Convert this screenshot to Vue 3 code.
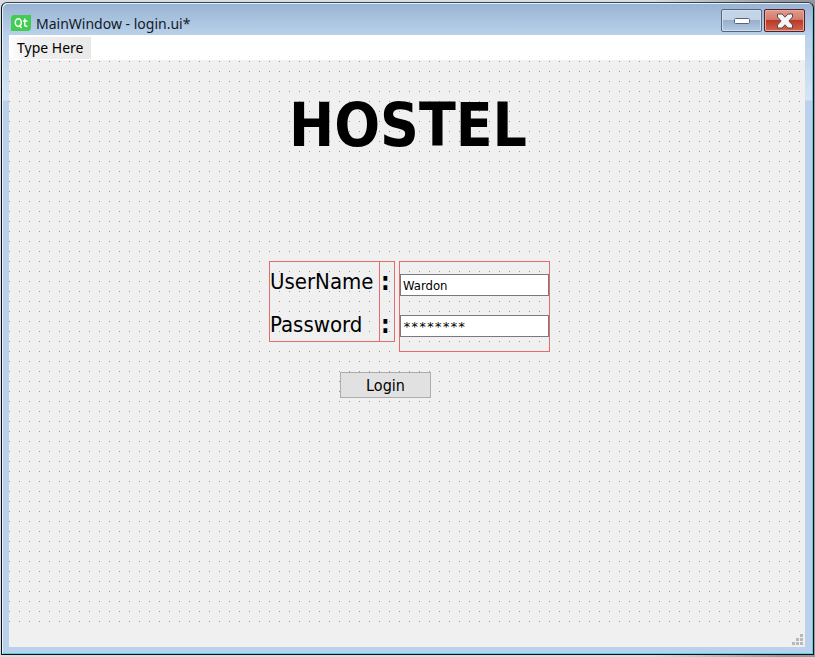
<script setup>
import { ref } from 'vue'

const username = ref('Wardon')
const password = ref('********')
</script>

<template>
  <div class="desktop">
    <main class="window">
      <header class="titlebar">
        <svg class="logo" viewBox="0 0 20 16" aria-hidden="true">
          <path d="M2 0H20V14L18 16H0V2Z" fill="#41cd52" />
          <ellipse cx="7.3" cy="7.6" rx="3" ry="3.9" fill="none" stroke="#fff" stroke-width="1.5" />
          <path d="M8 10L10.6 13M13.8 3.5V10.2Q13.8 11.6 16.4 11.2M12 6H16.4" fill="none" stroke="#fff" stroke-width="1.4" />
        </svg>
        <span class="title">MainWindow - login.ui*</span>
        <div class="controls">
          <button class="control" type="button" aria-label="Minimize">
            <svg width="18" height="8" viewBox="0 0 18 8"><rect x="1.5" y="1.5" width="15" height="5" rx="1" fill="#fff" stroke="#56647a" /></svg>
          </button>
          <button class="control close" type="button" aria-label="Close">
            <svg width="18" height="16" viewBox="0 0 18 16">
              <path d="M1.5 1H6L9 4.2L12 1H16.5V4L12.9 8L16.5 12V15H12L9 11.8L6 15H1.5V12L5.1 8L1.5 4Z" fill="#f6f4f4" stroke="#5c4650" stroke-linejoin="round" />
            </svg>
          </button>
        </div>
      </header>

      <div class="client">
        <nav class="menubar"><button class="menu" type="button">Type Here</button></nav>
        <section class="canvas">
          <h1>HOSTEL</h1>
          <form class="form" @submit.prevent>
            <div class="fields">
              <div class="box labels">
                <label for="username">UserName</label>
                <label for="password">Password</label>
              </div>
              <div class="box colons"><span>:</span><span>:</span></div>
              <div class="box inputs">
                <input id="username" v-model="username" type="text" />
                <input id="password" v-model="password" class="secret" type="text" autocomplete="off" />
              </div>
            </div>
            <button class="login" type="submit">Login</button>
          </form>
        </section>
        <footer class="statusbar">
          <svg width="12" height="12" viewBox="0 0 12 12" fill="#b9b9b9" aria-hidden="true">
            <path d="M8 0h3v3H8zM4 4h3v3H4zM8 4h3v3H8zM0 8h3v3H0zM4 8h3v3H4zM8 8h3v3H8z" />
          </svg>
        </footer>
      </div>
    </main>
  </div>
</template>

<style>
body {
  margin: 0;
}
</style>

<style scoped>
.desktop {
  box-sizing: border-box;
  display: flex;
  min-height: 100vh;
  padding: 2px 1px;
  background: linear-gradient(90deg, #d9dde2 0 80%, #94979b 96%);
  font-family: "DejaVu Sans Condensed", "DejaVu Sans", sans-serif;
  color: #000;
}
.window {
  box-sizing: border-box;
  flex: 1;
  display: flex;
  flex-direction: column;
  padding: 0 8px 7px 7px;
  border: 1px solid #111;
  border-top-color: #36414d;
  border-radius: 6px 6px 0 0;
  background: linear-gradient(180deg, #98b3d2 0, #b9d1ea 32px, #d5e5f5 97px, #b9d1ea 98px);
  box-shadow: inset 1px 1px 0 #e5f1fb, inset -1px -1px 0 #5ccbe9;
}
.titlebar {
  display: flex;
  align-items: center;
  height: 32px;
  padding-left: 2px;
}
.logo {
  width: 20px;
  height: 16px;
  margin-top: 8px;
}
.title {
  margin: 10px 0 0 5px;
  font: 14px/20px "Noto Sans", "Open Sans", sans-serif;
  color: #111b28;
}
.controls {
  display: flex;
  gap: 2px;
  margin-left: auto;
  padding-top: 3px;
}
.control {
  box-sizing: border-box;
  display: flex;
  align-items: center;
  justify-content: center;
  width: 41px;
  height: 23px;
  padding: 0;
  border: 1px solid #55677f;
  border-radius: 2px;
  background: linear-gradient(#c4d4e7 0 45%, #96afcd 50%, #b5cae2);
  box-shadow: inset 0 0 0 1px #cfdfef;
}
.close {
  border-color: #561f26;
  background: linear-gradient(#e29a8c 0, #d27c6d 45%, #b93a26 50%, #cf6650);
  box-shadow: inset 0 0 0 1px #e7aaa0;
}
.client {
  flex: 1;
  display: flex;
  flex-direction: column;
  background: #f0f0f0;
}
.menubar {
  display: flex;
  height: 25px;
  background: #fff;
}
.menu {
  height: 22px;
  margin-top: 2px;
  padding: 0 8px;
  border: 0;
  background: linear-gradient(90deg, #fff 0, #f0f0f0 20%, #e9e9e9);
  font: 14px/22px "Noto Sans", "Open Sans", sans-serif;
  color: #000;
}
.canvas {
  flex: 1;
  display: flex;
  flex-direction: column;
  align-items: center;
  background-image: conic-gradient(from 270deg at 1px 1px, #999 90deg, transparent 0);
  background-position: 0 1px;
  background-size: 10px 10px;
}
h1 {
  margin: 25px 0 0;
  padding-left: 2px;
  font-size: 60px;
  line-height: 80px;
  font-weight: 700;
}
.form {
  margin-top: 96px;
  padding-left: 5px;
}
.fields {
  display: flex;
  align-items: flex-start;
}
.box {
  box-sizing: border-box;
  display: flex;
  flex-direction: column;
  padding: 1px;
  box-shadow: inset 0 0 0 1px #e36c6c;
}
.labels,
.colons {
  height: 81px;
  padding-top: 3px;
  gap: 7px;
  font-size: 22px;
  line-height: 36px;
}
.labels {
  width: 111px;
}
.colons {
  width: 16px;
  margin-left: -1px;
  padding-left: 2px;
  font-size: 24px;
  font-weight: 700;
}
.inputs {
  width: 151px;
  height: 91px;
  margin-left: 4px;
  padding-top: 13px;
  gap: 19px;
}
input {
  box-sizing: border-box;
  width: 100%;
  height: 22px;
  padding: 0 2px;
  border: 1px solid #7a7a7a;
  border-radius: 0;
  background: #fff;
  font: 13px/20px "DejaVu Sans Condensed", "DejaVu Sans", sans-serif;
  color: #000;
}
.secret {
  font-family: "DejaVu Sans Mono", monospace;
}
.login {
  display: block;
  box-sizing: border-box;
  width: 91px;
  height: 26px;
  margin: 20px 0 0 71px;
  padding: 2px 0 0;
  border: 1px solid #adadad;
  background: #e1e1e1;
  font: 16px/22px "DejaVu Sans Condensed", "DejaVu Sans", sans-serif;
  color: #000;
}
.statusbar {
  display: flex;
  align-items: flex-end;
  justify-content: flex-end;
  height: 22px;
  padding: 0 1px 1px 0;
}
</style>
